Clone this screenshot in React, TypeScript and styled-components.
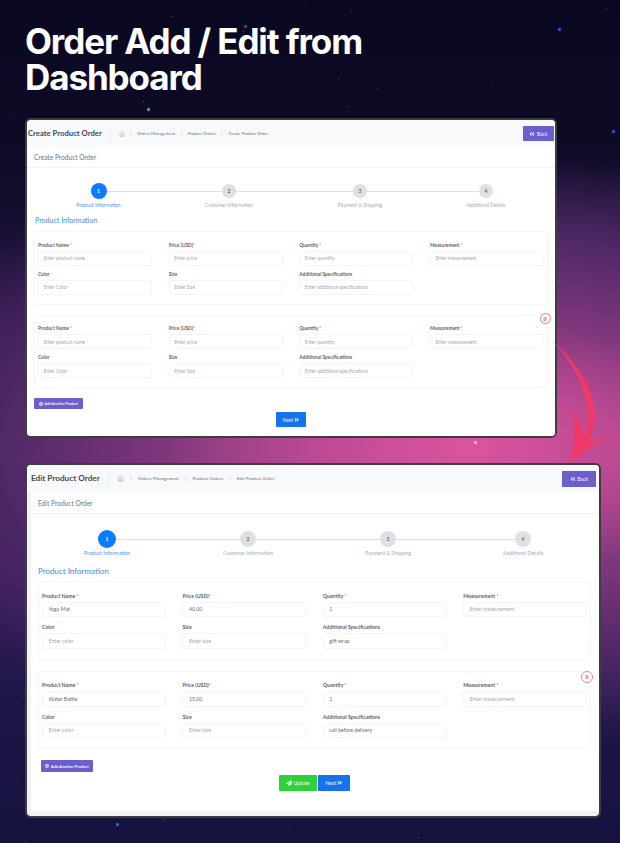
import React from 'react'
import styled, { createGlobalStyle } from 'styled-components'
import { ChevronRight, Home } from 'lucide-react'
import { FaAngleDoubleLeft, FaAngleDoubleRight, FaPaperPlane, FaPlusCircle, FaTrashAlt } from 'react-icons/fa'

const GlobalStyle = createGlobalStyle`
  html, body {
    margin: 0;
    padding: 0;
    background: #0b0922;
  }
  * {
    box-sizing: border-box;
  }
`

// background dust, seeded so every run draws the same sky
function makeStars() {
  let seed = 17
  const next = () => {
    seed = (seed * 9301 + 49297) % 233280
    return seed / 233280
  }
  const dust: string[] = []
  for (let i = 0; i < 120; i++) {
    const x = Math.round(next() * 620)
    const y = Math.round(next() * 843)
    const alpha = (0.15 + next() * 0.35).toFixed(2)
    dust.push(`${x}px ${y}px 0 0 rgba(205, 205, 235, ${alpha})`)
  }
  const bright = [
    '148px 109px 1px 1px rgba(120, 225, 205, .8)',
    '171px 16px 1px 0 rgba(130, 230, 210, .8)',
    '348px 106px 1px 0 rgba(90, 200, 140, .7)',
    '245px 26px 1px 1px rgba(70, 130, 210, .7)',
    '613px 131px 1px 1px rgba(60, 110, 235, .9)',
    '559px 29px 1px 1px rgba(60, 110, 235, .9)',
    '553px 15px 1px 0 rgba(60, 100, 210, .7)',
    '117px 824px 1px 1px rgba(70, 140, 230, .8)',
    '475px 442px 1px 1px rgba(255, 200, 225, .9)',
    '418px 837px 1px 0 rgba(210, 210, 235, .7)',
  ]
  return [...dust, ...bright].join(', ')
}

const starShadow = makeStars()

const Page = styled.main`
  position: relative;
  width: 620px;
  height: 843px;
  overflow: hidden;
  padding: 23px 0 0 25px;
  display: flex;
  flex-direction: column;
  align-items: flex-start;
  background:
    radial-gradient(ellipse 300px 120px at 470px 448px, rgba(222, 84, 160, .95) 0%, rgba(205, 78, 152, .7) 50%, rgba(200, 76, 150, 0) 100%),
    radial-gradient(ellipse 620px 300px at 450px 450px, #a8478e 0%, #86397f 42%, #4c2764 74%, rgba(32, 20, 72, 0) 100%),
    linear-gradient(180deg, #0a0820 0%, #0e0b28 20%, #2a1648 40%, #3a2060 62%, #1d1546 84%, #15123f 100%);
`

const Stars = styled.div`
  position: absolute;
  left: 0;
  top: 0;
  width: 1px;
  height: 1px;
  border-radius: 50%;
  box-shadow: ${starShadow};
`

const Heading = styled.h1`
  position: relative;
  margin: 0;
  width: 400px;
  font-family: Inter, 'Liberation Sans', sans-serif;
  font-size: 35px;
  line-height: 36px;
  font-weight: 700;
  letter-spacing: -1.1px;
  color: #fff;
`

const Swoosh = styled.svg`
  position: absolute;
  left: 545px;
  top: 335px;
  width: 75px;
  height: 135px;
`

const Window = styled.section<{ $edit?: boolean }>`
  position: relative;
  display: flex;
  flex-direction: column;
  overflow: hidden;
  border: 2px solid #3d3d3f;
  border-radius: 6px;
  background: ${p => (p.$edit ? '#f0f2f5' : '#fff')};
  --title: ${p => (p.$edit ? '8.2px' : '7.7px')};
  --crumb: ${p => (p.$edit ? '4.55px' : '4.2px')};
  --card-title: 6.6px;
  --step-label: ${p => (p.$edit ? '5.2px' : '5px')};
  --section: ${p => (p.$edit ? '8px' : '7.05px')};
  --label: ${p => (p.$edit ? '5.2px' : '4.8px')};
  --field: ${p => (p.$edit ? '5.2px' : '4.8px')};
  --button: ${p => (p.$edit ? '5.2px' : '5px')};
  width: ${p => (p.$edit ? '576px' : '532px')};
  height: ${p => (p.$edit ? '355px' : '320px')};
  margin-top: ${p => (p.$edit ? '25px' : '23px')};
`

const TopBar = styled.header<{ $edit?: boolean }>`
  flex: none;
  display: flex;
  align-items: center;
  height: 27px;
  padding: 0 ${p => (p.$edit ? '3px' : '1px')} 0 ${p => (p.$edit ? '4px' : '1px')};
  background: #f8f9fb;
`

const PageTitle = styled.h2<{ $edit?: boolean }>`
  margin: 0;
  padding-right: 8px;
  border-right: 1px solid #eff0f3;
  font-family: Lato, sans-serif;
  font-size: var(--title);
  line-height: 15px;
  font-weight: 700;
  color: #46494e;
  white-space: nowrap;
`

const Crumbs = styled.nav<{ $edit?: boolean }>`
  flex: 1;
  display: flex;
  align-items: center;
  gap: ${p => (p.$edit ? '3.8px' : '3.5px')};
  padding-left: ${p => (p.$edit ? '8.5px' : '8px')};
  font-family: Lato, sans-serif;
  font-size: var(--crumb);
  color: #6b6f76;
  white-space: nowrap;

  svg {
    flex: none;
    color: #8b8f96;
    stroke-width: 1.4;
  }
`

const BackButton = styled.button<{ $edit?: boolean }>`
  display: flex;
  align-items: center;
  justify-content: center;
  gap: 1.5px;
  width: ${p => (p.$edit ? '34px' : '31px')};
  height: ${p => (p.$edit ? '16px' : '15px')};
  padding: 0;
  border: 0;
  border-radius: 1px;
  background: #6a5fcd;
  font-family: Lato, sans-serif;
  font-size: var(--button);
  color: #f3f2ff;
`

const Card = styled.div<{ $edit?: boolean }>`
  flex: 1;
  display: flex;
  flex-direction: column;
  margin: ${p => (p.$edit ? '0 0 5px 4px' : '0')};
  background: #fff;
`

const CardHead = styled.div<{ $edit?: boolean }>`
  flex: none;
  display: flex;
  align-items: center;
  height: ${p => (p.$edit ? '22px' : '21px')};
  padding-left: 7px;
  border-bottom: 1px solid #f0f1f3;
  font-family: Lato, sans-serif;
  font-size: var(--card-title);
  color: #73767b;
`

const CardBody = styled.div<{ $edit?: boolean }>`
  padding: ${p => (p.$edit ? '16px 8px 0 7px' : '15px 7px 0 7px')};
`

const Stepper = styled.ol<{ $columns: string }>`
  display: grid;
  grid-template-columns: ${p => p.$columns};
  margin: 0;
  padding: 0;
  list-style: none;
`

const Step = styled.li<{ $edit?: boolean; $line: number }>`
  position: relative;
  display: flex;
  flex-direction: column;
  align-items: center;

  &::after {
    content: '';
    display: ${p => (p.$line ? 'block' : 'none')};
    position: absolute;
    left: 50%;
    top: ${p => (p.$edit ? '8.5px' : '7.5px')};
    width: ${p => p.$line}px;
    height: 1px;
    background: #dfe1e7;
  }
`

const StepSlot = styled.div<{ $edit?: boolean }>`
  position: relative;
  z-index: 1;
  display: flex;
  align-items: center;
  justify-content: center;
  height: ${p => (p.$edit ? '18px' : '16px')};
`

const StepDot = styled.span<{ $active?: boolean; $edit?: boolean }>`
  display: flex;
  align-items: center;
  justify-content: center;
  width: ${p => (p.$edit ? (p.$active ? 18 : 16) : p.$active ? 16 : 14)}px;
  height: ${p => (p.$edit ? (p.$active ? 18 : 16) : p.$active ? 16 : 14)}px;
  border-radius: 50%;
  background: ${p => (p.$active ? '#0b7bff' : '#dee0e4')};
  font-family: Lato, sans-serif;
  font-size: 5px;
  font-weight: 700;
  color: ${p => (p.$active ? '#fff' : '#666a70')};
`

const StepLabel = styled.span<{ $active?: boolean; $edit?: boolean }>`
  margin-top: ${p => (p.$edit ? '1.5px' : '2.5px')};
  font-family: Lato, sans-serif;
  font-size: var(--step-label);
  line-height: 7px;
  white-space: nowrap;
  color: ${p => (p.$active ? '#4f93f5' : '#a9acb1')};
`

const SectionTitle = styled.h3<{ $edit?: boolean }>`
  margin: ${p => (p.$edit ? '9.5px 0 5px 0' : '7.5px 0 5px 1px')};
  font-family: Lato, sans-serif;
  font-size: var(--section);
  line-height: 10px;
  font-weight: 400;
  color: #3f88ee;
`

const ProductGroup = styled.div<{ $edit?: boolean }>`
  position: relative;
  display: grid;
  grid-template-columns: repeat(4, 1fr);
  column-gap: ${p => (p.$edit ? '16.6px' : '16.5px')};
  row-gap: ${p => (p.$edit ? '7px' : '5px')};
  margin-bottom: ${p => (p.$edit ? '11px' : '10px')};
  padding: ${p => (p.$edit ? '10.5px 3px 10px 3px' : '9.5px 3px 9px 3px')};
  border: 1px solid #f6f7f8;
  border-radius: 2px;
`

const Field = styled.label`
  display: flex;
  flex-direction: column;
  gap: 2px;
  min-width: 0;
`

const FieldLabel = styled.span`
  font-family: Lato, sans-serif;
  font-size: var(--label);
  line-height: 7px;
  font-weight: 700;
  color: #5f6267;
  white-space: nowrap;

  b {
    font-weight: 400;
    color: #ef4a55;
  }
`

const FieldInput = styled.input<{ $edit?: boolean }>`
  width: 100%;
  height: ${p => (p.$edit ? '15.5px' : '15px')};
  padding: 0 0 0 ${p => (p.$edit ? '5.5px' : '4.5px')};
  border: 1px solid #f5f6f7;
  border-radius: 2px;
  outline: 0;
  background: #fff;
  font-family: Lato, sans-serif;
  font-size: var(--field);
  color: #6b6e74;

  &::placeholder {
    color: #a6a9ae;
    opacity: 1;
  }
`

const RemoveButton = styled.button<{ $edit?: boolean }>`
  position: absolute;
  top: ${p => (p.$edit ? '-1px' : '-2.5px')};
  right: ${p => (p.$edit ? '-3px' : '-3.5px')};
  display: flex;
  align-items: center;
  justify-content: center;
  width: ${p => (p.$edit ? '12px' : '11px')};
  height: ${p => (p.$edit ? '12px' : '11px')};
  padding: 0;
  border: 1px solid #f27f88;
  border-radius: 50%;
  background: #fff;
  color: #f0848c;
`

const AddButton = styled.button<{ $edit?: boolean }>`
  display: flex;
  align-items: center;
  justify-content: center;
  gap: 1.5px;
  width: ${p => (p.$edit ? '52px' : '49px')};
  height: ${p => (p.$edit ? '12px' : '11px')};
  margin-left: ${p => (p.$edit ? '3px' : '0')};
  padding: 0;
  border: 0;
  border-radius: 1px;
  background: #6a5fcd;
  font-family: Lato, sans-serif;
  font-size: ${p => (p.$edit ? '4px' : '3.6px')};
  font-weight: 700;
  color: #f3f2ff;
  white-space: nowrap;
`

const Actions = styled.div`
  display: flex;
  justify-content: center;
  gap: 1px;
  margin-top: 3px;
`

const ActionButton = styled.button<{ $tone: 'blue' | 'green'; $edit?: boolean }>`
  display: flex;
  align-items: center;
  justify-content: center;
  gap: 1px;
  width: ${p => (p.$tone === 'green' ? '38px' : p.$edit ? '32px' : '30px')};
  height: ${p => (p.$edit ? '16px' : '15px')};
  padding: 0;
  border: 0;
  border-radius: 1px;
  background: ${p => (p.$tone === 'green' ? '#2fd13a' : '#1673ec')};
  font-family: Lato, sans-serif;
  font-size: var(--button);
  color: #eef6ff;
`

type FieldData = { label: string; required?: boolean; placeholder: string; value?: string }

const field = (label: string, placeholder: string, required = false, value = ''): FieldData => ({
  label,
  placeholder,
  required,
  value,
})

function productFields(edit: boolean, values: string[]) {
  return [
    field('Product Name ', 'Enter product name', true, values[0]),
    field('Price (USD)', 'Enter price', true, values[1]),
    field('Quantity ', 'Enter quantity', true, values[2]),
    field('Measurement ', 'Enter measurement', true),
    field('Color', edit ? 'Enter color' : 'Enter Color'),
    field('Size', edit ? 'Enter size' : 'Enter Size'),
    field('Additional Specifications', 'Enter additional specifications', false, values[3]),
  ]
}

const stepNames = ['Product Information', 'Customer Information', 'Payment & Shipping', 'Additional Details']

type OrderFormProps = {
  edit?: boolean
  title: string
  crumb: string
  columns: string
  lines: number[]
  products: string[][]
}

function OrderForm({ edit, title, crumb, columns, lines, products }: OrderFormProps) {
  return (
    <Window $edit={edit}>
      <TopBar $edit={edit}>
        <PageTitle $edit={edit}>{title}</PageTitle>
        <Crumbs $edit={edit}>
          <Home size={edit ? 7 : 6} />
          <ChevronRight size={edit ? 6 : 5.5} />
          <span>Orders Management</span>
          <ChevronRight size={edit ? 6 : 5.5} />
          <span>Product Orders</span>
          <ChevronRight size={edit ? 6 : 5.5} />
          <span>{crumb}</span>
        </Crumbs>
        <BackButton $edit={edit}>
          <FaAngleDoubleLeft size={6} />
          Back
        </BackButton>
      </TopBar>
      <Card $edit={edit}>
        <CardHead $edit={edit}>{crumb}</CardHead>
        <CardBody $edit={edit}>
          <Stepper $columns={columns}>
            {stepNames.map((name, i) => (
              <Step key={name} $edit={edit} $line={lines[i] ?? 0}>
                <StepSlot $edit={edit}>
                  <StepDot $active={i === 0} $edit={edit}>{i + 1}</StepDot>
                </StepSlot>
                <StepLabel $active={i === 0} $edit={edit}>{name}</StepLabel>
              </Step>
            ))}
          </Stepper>
          <SectionTitle $edit={edit}>Product Information</SectionTitle>
          {products.map((values, index) => (
            <ProductGroup key={index} $edit={edit}>
              {index > 0 && (
                <RemoveButton $edit={edit}>
                  <FaTrashAlt size={4} />
                </RemoveButton>
              )}
              {productFields(!!edit, values).map(f => (
                <Field key={f.label}>
                  <FieldLabel>
                    {f.label}
                    {f.required && <b>*</b>}
                  </FieldLabel>
                  <FieldInput $edit={edit} readOnly placeholder={f.placeholder} defaultValue={f.value} />
                </Field>
              ))}
            </ProductGroup>
          ))}
          <AddButton $edit={edit}>
            <FaPlusCircle size={4} />
            Add Another Product
          </AddButton>
          <Actions>
            {edit && (
              <ActionButton $tone='green' $edit>
                <FaPaperPlane size={6} />
                Update
              </ActionButton>
            )}
            <ActionButton $tone='blue' $edit={edit}>
              Next
              <FaAngleDoubleRight size={5.5} />
            </ActionButton>
          </Actions>
        </CardBody>
      </Card>
    </Window>
  )
}

export default function App() {
  return (
    <Page>
      <GlobalStyle />
      <Stars />
      <Heading>Order Add / Edit from Dashboard</Heading>
      <OrderForm
        title='Create Product Order'
        crumb='Create Product Order'
        columns='129px 132px 130px 122px'
        lines={[130.5, 131, 126]}
        products={[['', '', '', ''], ['', '', '', '']]}
      />
      <OrderForm
        edit
        title='Edit Product Order'
        crumb='Edit Product Order'
        columns='138px 144px 136px 134px'
        lines={[141, 140, 135]}
        products={[
          ['Yoga Mat', '40.00', '1', 'gift wrap'],
          ['Water Bottle', '15.00', '1', 'call before delivery'],
        ]}
      />
      <Swoosh viewBox='545 335 75 135'>
        <path
          d='M553 342 C578 362 598 395 594.5 422 L590 443 L613 433 Q590 447 570 462 Q577 438 573 407 Q581 425 585 438 C592 410 585 375 553 342 Z'
          fill='#ee3a66'
        />
      </Swoosh>
    </Page>
  )
}
